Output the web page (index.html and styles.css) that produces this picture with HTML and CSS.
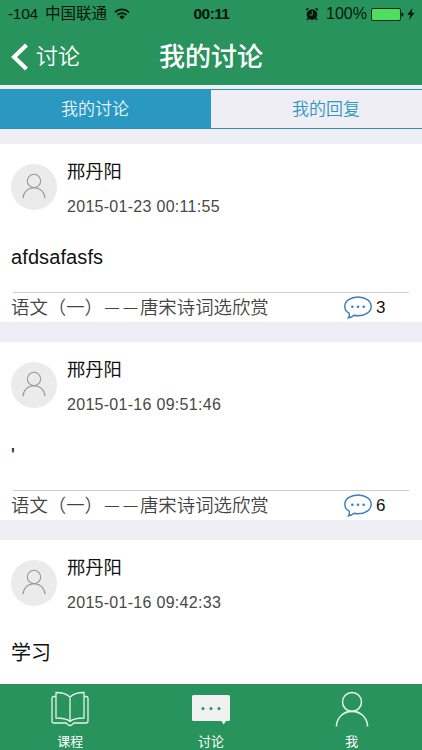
FILE: index.html
```html
<!DOCTYPE html>
<html lang="zh-CN">
<head>
<meta charset="utf-8">
<title>我的讨论</title>
<link rel="stylesheet" href="styles.css">
</head>
<body>
<svg class="defs" width="0" height="0" aria-hidden="true">
  <symbol id="person" viewBox="0 0 36 38"><circle cx="18" cy="11.5" r="10"/><path d="M1.5 37.5C2 28 9 21.5 18 21.5S34 28 34.5 37.5"/></symbol>
  <symbol id="bubble" viewBox="0 0 28 23"><path d="M5.200 17.200C2.500 15.600 .8 13.200 .8 10.400C.8 5 6.600 1 14 1S27.200 5 27.200 10.400S21.400 19.800 14 19.800C12.500 19.800 11.200 19.600 10 19.300C8.600 20.700 6.800 21.600 4.400 21.800C5.400 20.600 5.700 19.100 5.200 17.200Z"/><g class="dots"><circle cx="8.300" cy="10.700" r="1.300"/><circle cx="14" cy="10.700" r="1.300"/><circle cx="19.700" cy="10.700" r="1.300"/></g></symbol>
</svg>
<div class="app">
  <header class="header">
    <div class="status">
      <div class="status-side"><span class="signal">-104</span><span class="carrier">中国联通</span>
        <svg class="wifi" viewBox="0 0 16 12"><path d="M1 4.300a10 10 0 0 1 14 0M3.500 7a6.300 6.300 0 0 1 9 0"/><path class="solid" d="M8 11.500 5.300 8.800a3.900 3.900 0 0 1 5.400 0Z"/></svg>
      </div>
      <span class="clock">00:11</span>
      <div class="status-side status-right">
        <svg class="alarm" viewBox="0 0 14 14"><circle class="solid" cx="7" cy="7.500" r="5.300"/><path d="M1 3.300 3.300 1M13 3.300 10.700 1M3.300 11.500 2 13M10.700 11.500 12 13"/><path class="hand" d="M7.300 4v4H4.600"/></svg>
        <span class="percent">100%</span>
        <svg class="battery" viewBox="0 0 33 13"><rect x=".5" y=".5" width="29" height="12" rx="1.500"/><path class="solid" d="M30.500 4.300q2 .4 2 2.200t-2 2.200Z"/></svg>
        <svg class="bolt" viewBox="0 0 8 12"><path d="M5.500 0 .4 6.700h3L2 12l5.600-7.200H4.500Z"/></svg>
      </div>
    </div>
    <div class="nav">
      <a class="back"><svg class="chevron" viewBox="0 0 18 28"><path d="M15.500 2 3 14l12.500 12"/></svg>讨论</a>
      <h1 class="title">我的讨论</h1>
    </div>
  </header>
  <div class="tabs"><div class="tab active">我的讨论</div><div class="tab">我的回复</div></div>
  <main class="list">
    <article class="card">
      <div class="author"><div class="avatar"><svg><use href="#person"/></svg></div><div><div class="name">邢丹阳</div><div class="date">2015-01-23 00:11:55</div></div></div>
      <p class="content">afdsafasfs</p>
      <div class="foot"><span class="course">语文（一）<span class="dash">——</span>唐宋诗词选欣赏</span><svg class="bubble"><use href="#bubble"/></svg><span class="count">3</span></div>
    </article>
    <article class="card">
      <div class="author"><div class="avatar"><svg><use href="#person"/></svg></div><div><div class="name">邢丹阳</div><div class="date">2015-01-16 09:51:46</div></div></div>
      <p class="content">'</p>
      <div class="foot"><span class="course">语文（一）<span class="dash">——</span>唐宋诗词选欣赏</span><svg class="bubble"><use href="#bubble"/></svg><span class="count">6</span></div>
    </article>
    <article class="card">
      <div class="author"><div class="avatar"><svg><use href="#person"/></svg></div><div><div class="name">邢丹阳</div><div class="date">2015-01-16 09:42:33</div></div></div>
      <p class="content">学习</p>
    </article>
  </main>
  <nav class="tabbar">
    <div class="item"><svg class="book" viewBox="0 0 38 36"><path d="M19 6C16 3 10 1.500 5 1.500V27c5 0 11 .800 14 3.500 3-2.700 9-3.500 14-3.500V1.500C28 1.500 22 3 19 6ZM19 6v24.500M5 5.500H3Q1 5.500 1 7.500V30Q1 32 3 32h12c1 0 1.500 2.500 4 2.500S22 32 23 32h12Q37 32 37 30V7.500Q37 5.500 35 5.500h-2"/></svg><span>课程</span></div>
    <div class="item"><svg class="talk" viewBox="0 0 38 36"><path d="M1.500 4h35Q38 4 38 5.500v23Q38 30 36.500 30H34l-2.300 3.500L29.300 30H1.500Q0 30 0 28.500v-23Q0 4 1.500 4Z"/><g><circle cx="11" cy="17.500" r="1.500"/><circle cx="19" cy="17.500" r="1.500"/><circle cx="27" cy="17.500" r="1.500"/></g></svg><span>讨论</span></div>
    <div class="item"><svg class="me"><use href="#person"/></svg><span>我</span></div>
  </nav>
</div>
</body>
</html>
```
FILE: styles.css
```css
* { box-sizing: border-box; }
body { margin: 0; font-family: "Liberation Sans", "Noto Sans CJK SC", sans-serif; background: #efeef4; color: #111; }
svg { display: block; flex: none; fill: none; }
.defs { position: absolute; }
.app { width: 422px; height: 750px; display: flex; flex-direction: column; overflow: hidden; }
.header { height: 85px; flex: none; background: #28935c; }
.status { height: 28px; display: grid; grid-template-columns: 1fr auto 1fr; align-items: center; padding: 0 7px 0 8px; color: #05160d; font-size: 16px; line-height: 28px; }
.status-side { display: flex; align-items: center; white-space: nowrap; }
.status-right { justify-content: flex-end; }
.signal { font-size: 15.500px; width: 37px; letter-spacing: -0.300px; }
.carrier { font-size: 15.500px; width: 69px; }
.wifi { width: 16px; height: 12px; stroke: #05160d; stroke-width: 1.700; }
.solid { fill: #05160d; stroke: none; }
.clock { font-size: 15.500px; font-weight: bold; letter-spacing: -0.600px; }
.alarm { width: 14px; height: 14px; stroke: #05160d; stroke-width: 1.500; margin-right: 7px; }
.alarm .hand { stroke: #28935c; stroke-width: 1; }
.percent { width: 45px; font-size: 16px; }
.battery { width: 33px; height: 13px; fill: #4fdd62; stroke: #082b18; margin-right: 3px; }
.bolt { width: 8px; height: 12px; fill: #05160d; }
.nav { height: 57px; display: grid; grid-template-columns: 1fr auto 1fr; align-items: center; padding-left: 11px; color: #fff; }
.back { display: flex; align-items: center; gap: 7px; font-size: 22px; line-height: 54px; height: 56px; font-weight: 350; }
.chevron { width: 18px; height: 28px; stroke: #fff; stroke-width: 4.200; }
.title { margin: 0 11px 0 0; font-size: 26px; line-height: 56px; font-weight: 500; }
.tabs { height: 40px; flex: none; margin-top: 4px; display: flex; border: 1px solid #2b91b9; border-width: 1px 0; font-size: 17px; font-weight: 350; line-height: 39px; color: #2b98c1; }
.tab { width: 50%; text-align: center; padding-right: 21px; }
.tab + .tab { padding: 0 0 0 19px; }
.active { background: #2a98c1; color: #e6f7ff; }
.list { margin-top: 15px; flex: 1; min-height: 0; display: flex; flex-direction: column; gap: 20px; overflow: hidden; }
.card { height: 178px; flex: none; background: #fff; padding: 14px 13px 0 11px; }
.author { display: flex; height: 78px; gap: 10px; }
.avatar { width: 46px; height: 46px; margin-top: 6px; border-radius: 50%; background: #ebebeb; display: flex; justify-content: center; padding-top: 9px; }
.avatar svg { width: 24px; height: 26px; stroke: #969696; stroke-width: 1.600; }
.name { font-size: 18.300px; line-height: 27px; }
.date { margin-top: 10px; font-size: 16px; line-height: 24px; letter-spacing: 0.290px; color: #484848; }
.content { margin: 8px 0 0; height: 48px; font-size: 20px; line-height: 26px; letter-spacing: 0.100px; }
.foot { height: 30px; margin-left: 2px; border-top: 1px solid #cecece; display: flex; align-items: center; }
.course { width: 333px; margin-left: -2px; font-size: 18.400px; line-height: 28px; font-weight: 350; color: #444; white-space: nowrap; }
.dash { font-size: 14px; letter-spacing: 4.500px; margin-left: 2px; margin-right: -2px; vertical-align: 2px; }
.bubble { width: 28px; height: 23px; stroke: #397fb9; stroke-width: 1.400; }
.dots { fill: #397fb9; stroke: none; }
.count { margin-left: 4px; font-size: 17px; }
.tabbar { height: 66px; flex: none; background: #28935c; display: flex; color: #fff; font-size: 13px; line-height: 20px; }
.item { flex: 1; display: flex; flex-direction: column; align-items: center; padding-top: 7px; }
.item svg { margin-bottom: 5px; width: 38px; height: 36px; stroke: #e2f5e9; stroke-width: 1.300; }
.item .talk { fill: #f0f0f0; stroke: none; }
.talk g { fill: #28935c; }
.item .me { stroke-width: 1.600; }
```
